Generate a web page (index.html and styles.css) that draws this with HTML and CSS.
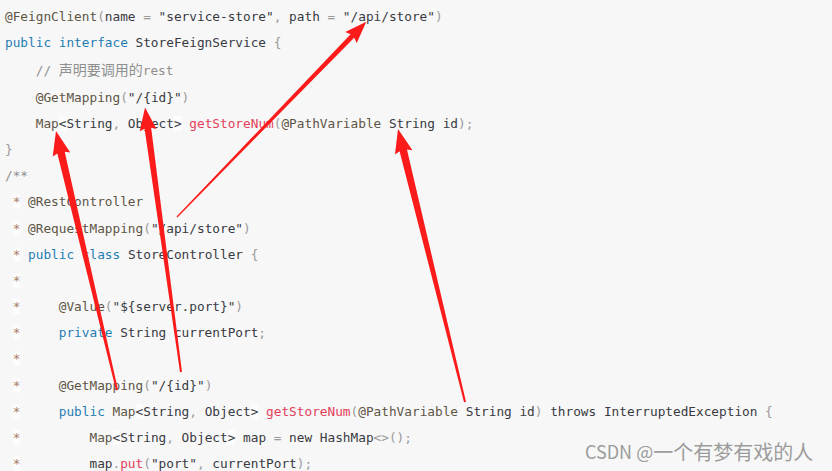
FILE: index.html
```html
<!DOCTYPE html>
<html lang="zh">
<head>
<meta charset="utf-8">
<title>StoreFeignService</title>
<link rel="stylesheet" href="styles.css">
</head>
<body>
<div class="page">
<pre class="code"><span class="an">@FeignClient</span><span class="p">(</span>name <span class="p">=</span> <span class="s">"service-store"</span><span class="p">,</span> path <span class="p">=</span> <span class="s">"/api/store"</span><span class="p">)</span>
<span class="k">public</span> <span class="k">interface</span> StoreFeignService <span class="p">{</span>
    <span class="c">// <span class="cjk">声明要调用的</span>rest</span>
    <span class="an">@GetMapping</span><span class="p">(</span><span class="s">"/{id}"</span><span class="p">)</span>
    <span class="an">Map</span><span class="lt">&lt;</span>String<span class="p">,</span> Object<span class="lt">&gt;</span> <span class="f">getStoreNum</span><span class="p">(</span><span class="an">@PathVariable</span> String id<span class="p">);</span>
<span class="p">}</span>
<span class="c">/**</span>
 <span class="st">*</span> <span class="an">@RestController</span>
 <span class="st">*</span> <span class="an">@RequestMapping</span><span class="p">(</span><span class="s">"/api/store"</span><span class="p">)</span>
 <span class="st">*</span> <span class="k">public</span> <span class="k">class</span> StoreController <span class="p">{</span>
 <span class="st">*</span>
 <span class="st">*</span>     <span class="an">@Value</span><span class="p">(</span><span class="s">"${server.port}"</span><span class="p">)</span>
 <span class="st">*</span>     <span class="k">private</span> String currentPort<span class="p">;</span>
 <span class="st">*</span>
 <span class="st">*</span>     <span class="an">@GetMapping</span><span class="p">(</span><span class="s">"/{id}"</span><span class="p">)</span>
 <span class="st">*</span>     <span class="k">public</span> <span class="an">Map</span><span class="lt">&lt;</span>String<span class="p">,</span> Object<span class="lt">&gt;</span> <span class="f">getStoreNum</span><span class="p">(</span><span class="an">@PathVariable</span> String id<span class="p">)</span> throws InterruptedException <span class="p">{</span>
 <span class="st">*</span>         <span class="an">Map</span><span class="lt">&lt;</span>String<span class="p">,</span> Object<span class="lt">&gt;</span> map <span class="p">=</span> new HashMap<span class="p">&lt;&gt;();</span>
 <span class="st">*</span>         map<span class="p">.</span><span class="f">put</span><span class="p">(</span><span class="s">"port"</span><span class="p">,</span> currentPort<span class="p">);</span></pre>
<svg class="arrows" width="832" height="471" viewBox="0 0 832 471" aria-hidden="true">
  <g fill="#fb1b1b">
    <polygon transform="translate(177 217) rotate(-45.9)" points="0,-0.6 252,-2.5 250,-8 272,0 250,8 252,2.5 0,0.6"/>
    <polygon transform="translate(117 390) rotate(-103.26)" points="0,-1 244,-3.8 242,-9 266,0 242,9 244,3.8 0,1"/>
    <polygon transform="translate(181 372) rotate(-97.74)" points="0,-1 246,-3.3 244,-8.5 267,0 244,8.5 246,3.3 0,1"/>
    <polygon transform="translate(465 402) rotate(-103.79)" points="0,-1 259,-3.8 257,-9 281,0 257,9 259,3.8 0,1"/>
  </g>
</svg>
<div class="watermark">CSDN @<span class="wm-cjk">一个有梦有戏的人</span></div>
</div>
</body>
</html>
```
FILE: styles.css
```css
html, body {
  margin: 0;
  padding: 0;
  background: #f7f7f7;
  overflow: hidden;
}
.page {
  position: relative;
  width: 832px;
  height: 471px;
  overflow: hidden;
}
.code {
  margin: 0;
  padding: 4px 0 0 5px;
  font-family: "DejaVu Sans Mono", "Noto Sans CJK SC", monospace;
  font-size: 12.75px;
  line-height: 26.18px;
  color: #383a42;
  white-space: pre;
}
.k { color: #1f7db4; }
.an { color: #5e5545; }
.s { color: #383a42; }
.p { color: #9a9a9a; }
.f { color: #e4405a; }
.c { color: #8f8f8f; }
.st { color: #a8826a; background: #fcfcfc; }
.lt { background: #fcfcfc; }
.cjk {
  font-family: "Noto Sans CJK SC", sans-serif;
  font-size: 14px;
}
.arrows {
  position: absolute;
  left: 0;
  top: 0;
}
.watermark {
  position: absolute;
  left: 585px;
  top: 438px;
  font-family: "Noto Sans CJK SC", "Liberation Sans", sans-serif;
  font-size: 18px;
  line-height: 26px;
  color: #9c9c9c;
  white-space: nowrap;
}
.wm-cjk {
  font-size: 20px;
  letter-spacing: 0;
  vertical-align: -1px;
}
```
